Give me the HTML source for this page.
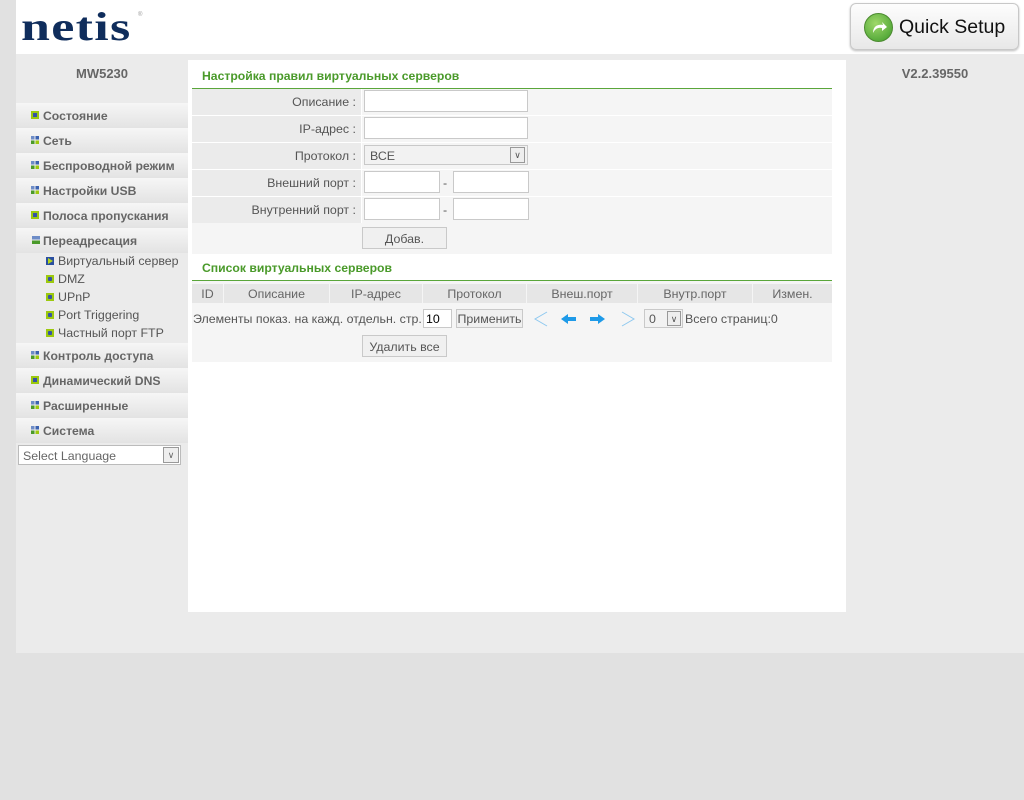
<!DOCTYPE html>
<html><head><meta charset="utf-8"><style>
*{margin:0;padding:0;box-sizing:border-box}
body{width:1024px;height:800px;background:#e1e1e1;font-family:"Liberation Sans","DejaVu Sans",sans-serif;font-size:12.4px;color:#555;position:relative;overflow:hidden}
.a{position:absolute}
#hdr{left:16px;top:0;width:1008px;height:54px;background:#fff}
#main{left:16px;top:54px;width:1008px;height:599px;background:#ebebeb}
#content{left:188px;top:60px;width:658px;height:552px;background:#fff}
.logo{left:21px;top:7px;font-family:"Liberation Serif",serif;font-weight:bold;font-size:40px;line-height:40px;color:#0f2d5c;letter-spacing:1px;transform:scaleX(1.3);transform-origin:left top}
.reg{left:138px;top:12px;font-size:6px;color:#999}
.qs{left:850px;top:3px;width:169px;height:47px;border:1px solid #c8c8c8;border-radius:6px;background:linear-gradient(#fdfdfd,#e8e8e8);box-shadow:0 1px 2px #bbb}
.qs .ic{position:absolute;left:13px;top:9px;width:29px;height:29px;border-radius:50%;background:radial-gradient(circle at 40% 35%,#9fd86a,#3c9a2a);border:1px solid #4c8a30}
.qs .t{position:absolute;left:48px;top:12px;font-size:19.5px;color:#111}
.model{left:16px;top:66px;width:172px;text-align:center;font-weight:bold;font-size:13px;color:#666}
.ver{left:846px;top:66px;width:178px;text-align:center;font-weight:bold;font-size:13px;color:#666}
.mi{left:16px;width:172px;height:25px;background:linear-gradient(#f6f6f6,#e3e3e3);font-weight:bold;color:#666;padding:6px 0 0 27px;font-size:12.2px}
.sq{position:absolute;left:15px;top:8px;width:8px;height:8px}
.sub{left:58px;font-size:12.4px;color:#555}
.sub i{position:absolute;left:-12px;top:3px;width:8px;height:8px;background:#9cc90e}
.sub i:after{content:"";position:absolute;left:2px;top:2px;width:4px;height:4px;background:#3552a7;border-radius:1px}
.sec{left:202px;font-weight:bold;color:#4a9a2a;font-size:12.2px}
.gl{left:192px;width:640px;height:1px;background:#5aa63a}
.lab{left:192px;width:169px;height:26px;background:#ebebeb;text-align:right;padding:6px 5px 0 0;color:#555}
.val{left:362px;width:470px;height:26px;background:#f5f5f5}
.inp{position:absolute;background:#fff;border:1px solid #c9c9c9;height:22px}
.btn{position:absolute;border:1px solid #c9c9c9;background:#f0f0f0;text-align:center;color:#555;padding-top:4px;height:22px}
.th{top:284px;height:19px;background:#e6e6e6;text-align:center;padding-top:3px;color:#666}
</style></head><body>
<div class="a" id="hdr"></div>
<div class="a" id="main"></div>
<div class="a" id="content"></div>
<div class="a logo">netis</div><div class="a reg">®</div>
<div class="a qs"><div class="ic"><svg width="29" height="29" viewBox="0 0 29 29"><path d="M8 19 C8 12 13 10 18 11 L17 8 L22 13 L17 17 L17 14 C13 13 10 15 8 19Z" fill="#fff"/></svg></div><div class="t">Quick Setup</div></div>
<div class="a model">MW5230</div>
<div class="a ver">V2.2.39550</div>

<div class="a mi" style="top:103px"><span class="sq" style="background:#9cc90e"><span style="position:absolute;left:2px;top:2px;width:4px;height:4px;background:#3552a7"></span></span>Состояние</div>
<div class="a mi" style="top:128px"><svg class="sq" viewBox="0 0 8 8"><rect width="3.5" height="3.5" fill="#6d8cc7"/><rect x="4.5" width="3.5" height="3.5" fill="#3b62b0"/><rect y="4.5" width="3.5" height="3.5" fill="#4a9a2a"/><rect x="4.5" y="4.5" width="3.5" height="3.5" fill="#9cc90e"/></svg>Сеть</div>
<div class="a mi" style="top:153px"><svg class="sq" viewBox="0 0 8 8"><rect width="3.5" height="3.5" fill="#6d8cc7"/><rect x="4.5" width="3.5" height="3.5" fill="#3b62b0"/><rect y="4.5" width="3.5" height="3.5" fill="#4a9a2a"/><rect x="4.5" y="4.5" width="3.5" height="3.5" fill="#9cc90e"/></svg>Беспроводной режим</div>
<div class="a mi" style="top:178px"><svg class="sq" viewBox="0 0 8 8"><rect width="3.5" height="3.5" fill="#6d8cc7"/><rect x="4.5" width="3.5" height="3.5" fill="#3b62b0"/><rect y="4.5" width="3.5" height="3.5" fill="#4a9a2a"/><rect x="4.5" y="4.5" width="3.5" height="3.5" fill="#9cc90e"/></svg>Настройки USB</div>
<div class="a mi" style="top:203px"><span class="sq" style="background:#9cc90e"><span style="position:absolute;left:2px;top:2px;width:4px;height:4px;background:#3552a7"></span></span>Полоса пропускания</div>
<div class="a mi" style="top:228px"><svg class="sq" viewBox="0 0 8 8" style="width:10px"><rect width="8" height="3.5" fill="#6d8cc7"/><rect y="4.5" width="8" height="3.5" fill="#4a9a2a"/></svg>Переадресация</div>
<div class="a sub" style="top:254px"><svg style="position:absolute;left:-12px;top:3px" width="8" height="8"><rect width="8" height="8" fill="#2a4fa0"/><path d="M2 1L7 4L2 7Z" fill="#b5d618"/></svg>Виртуальный сервер</div>
<div class="a sub" style="top:272px"><i></i>DMZ</div>
<div class="a sub" style="top:290px"><i></i>UPnP</div>
<div class="a sub" style="top:308px"><i></i>Port Triggering</div>
<div class="a sub" style="top:326px"><i></i>Частный порт FTP</div>
<div class="a mi" style="top:343px"><svg class="sq" viewBox="0 0 8 8"><rect width="3.5" height="3.5" fill="#6d8cc7"/><rect x="4.5" width="3.5" height="3.5" fill="#3b62b0"/><rect y="4.5" width="3.5" height="3.5" fill="#4a9a2a"/><rect x="4.5" y="4.5" width="3.5" height="3.5" fill="#9cc90e"/></svg>Контроль доступа</div>
<div class="a mi" style="top:368px"><span class="sq" style="background:#9cc90e"><span style="position:absolute;left:2px;top:2px;width:4px;height:4px;background:#3552a7"></span></span>Динамический DNS</div>
<div class="a mi" style="top:393px"><svg class="sq" viewBox="0 0 8 8"><rect width="3.5" height="3.5" fill="#6d8cc7"/><rect x="4.5" width="3.5" height="3.5" fill="#3b62b0"/><rect y="4.5" width="3.5" height="3.5" fill="#4a9a2a"/><rect x="4.5" y="4.5" width="3.5" height="3.5" fill="#9cc90e"/></svg>Расширенные</div>
<div class="a mi" style="top:418px"><svg class="sq" viewBox="0 0 8 8"><rect width="3.5" height="3.5" fill="#6d8cc7"/><rect x="4.5" width="3.5" height="3.5" fill="#3b62b0"/><rect y="4.5" width="3.5" height="3.5" fill="#4a9a2a"/><rect x="4.5" y="4.5" width="3.5" height="3.5" fill="#9cc90e"/></svg>Система</div>
<div class="a" style="left:18px;top:445px;width:163px;height:20px;background:#fff;border:1px solid #bbb;padding:3px 4px;color:#666">Select Language<span style="position:absolute;right:1px;top:1px;width:16px;height:16px;border:1px solid #999;background:#eee;text-align:center;font-size:9px;line-height:15px">&#x2228;</span></div>

<div class="a sec" style="top:69px">Настройка правил виртуальных серверов</div>
<div class="a gl" style="top:88px"></div>
<div class="a lab" style="top:89px">Описание :</div><div class="a val" style="top:89px"><div class="inp" style="left:2px;top:1px;width:164px"></div></div>
<div class="a lab" style="top:116px">IP-адрес :</div><div class="a val" style="top:116px"><div class="inp" style="left:2px;top:1px;width:164px"></div></div>
<div class="a lab" style="top:143px">Протокол :</div><div class="a val" style="top:143px"><div class="inp" style="left:2px;top:2px;width:164px;height:20px;background:#f2f2f2;padding:3px 5px">ВСЕ<span style="position:absolute;right:2px;top:1px;width:15px;height:16px;border:1px solid #999;background:#eee;text-align:center;font-size:9px;line-height:15px">&#x2228;</span></div></div>
<div class="a lab" style="top:170px">Внешний порт :</div><div class="a val" style="top:170px"><div class="inp" style="left:2px;top:1px;width:76px"></div><span style="position:absolute;left:81px;top:6px">-</span><div class="inp" style="left:91px;top:1px;width:76px"></div></div>
<div class="a lab" style="top:197px">Внутренний порт :</div><div class="a val" style="top:197px"><div class="inp" style="left:2px;top:1px;width:76px"></div><span style="position:absolute;left:81px;top:6px">-</span><div class="inp" style="left:91px;top:1px;width:76px"></div></div>
<div class="a" style="left:192px;top:223px;width:640px;height:31px;background:#f5f5f5"><div class="btn" style="left:170px;top:4px;width:85px">Добав.</div></div>

<div class="a sec" style="top:261px">Список виртуальных серверов</div>
<div class="a gl" style="top:280px"></div>
<div class="a" style="left:192px;top:281px;width:640px;height:81px;background:#f5f5f5"></div>
<div class="a th" style="left:192px;width:31px">ID</div>
<div class="a th" style="left:224px;width:105px">Описание</div>
<div class="a th" style="left:330px;width:92px">IP-адрес</div>
<div class="a th" style="left:423px;width:103px">Протокол</div>
<div class="a th" style="left:527px;width:110px">Внеш.порт</div>
<div class="a th" style="left:638px;width:114px">Внутр.порт</div>
<div class="a th" style="left:753px;width:79px">Измен.</div>
<div class="a" style="left:193px;top:312px">Элементы показ. на кажд. отдельн. стр.</div>
<div class="inp" style="left:423px;top:309px;width:29px;height:19px;color:#000;padding:2px 2px">10</div>
<div class="btn" style="left:456px;top:309px;width:67px;height:19px;padding-top:2px">Применить</div>
<svg class="a" style="left:532px;top:310px" width="105" height="18"><path d="M15 2L3 9L15 16" stroke="#8ec8ef" fill="none" stroke-width="1"/><path d="M29 9L36 4L36 7L44 7L44 11L36 11L36 14Z" fill="#1e9ae8"/><path d="M73 9L66 4L66 7L58 7L58 11L66 11L66 14Z" fill="#1e9ae8"/><path d="M90 2L102 9L90 16" stroke="#8ec8ef" fill="none" stroke-width="1"/></svg>
<div class="inp" style="left:644px;top:309px;width:39px;height:19px;background:#f2f2f2;padding:2px 4px">0<span style="position:absolute;right:1px;top:1px;width:14px;height:15px;border:1px solid #999;background:#eee;text-align:center;font-size:9px;line-height:14px">&#x2228;</span></div>
<div class="a" style="left:685px;top:312px">Всего страниц:0</div>
<div class="btn" style="left:362px;top:335px;width:85px">Удалить все</div>
</body></html>
